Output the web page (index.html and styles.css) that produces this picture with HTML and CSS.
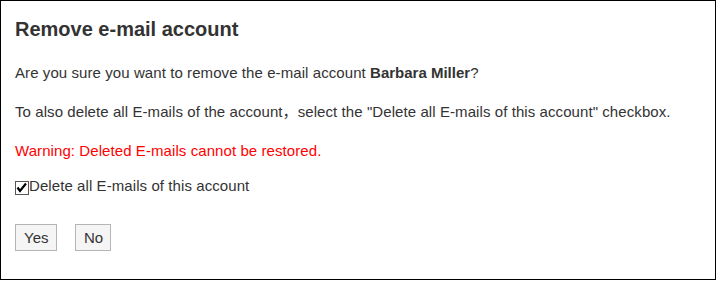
FILE: index.html
```html
<!DOCTYPE html>
<html>
<head>
<meta charset="utf-8">
<link rel="stylesheet" href="styles.css">
</head>
<body>
<div class="dialog">
  <h1 class="title">Remove e-mail account</h1>
  <p class="msg msg-first">Are you sure you want to remove the e-mail account <b>Barbara Miller</b>?</p>
  <p class="msg">To also delete all E-mails of the account，select the "Delete all E-mails of this account" checkbox.</p>
  <p class="msg warn">Warning: Deleted E-mails cannot be restored.</p>
  <label class="check"><span class="box"><svg width="13" height="13" viewBox="0 0 13 13"><path d="M2.5 6.5 L5 10 L11 2.5" fill="none" stroke="#000" stroke-width="2.2"/></svg></span>Delete all E-mails of this account</label>
  <div class="buttons">
    <button class="btn btn-yes">Yes</button>
    <button class="btn btn-no">No</button>
  </div>
</div>
</body>
</html>
```
FILE: styles.css
```css
html, body {
  margin: 0;
  padding: 0;
  background: #fff;
}
body {
  font-family: "Liberation Sans", "Noto Sans CJK JP", Arial, sans-serif;
  color: #333;
}
.dialog {
  box-sizing: border-box;
  width: 716px;
  height: 280px;
  border: 1px solid #000;
  padding: 16px 14px 0 14px;
}
.title {
  margin: 0;
  font-size: 20px;
  line-height: 24px;
  font-weight: bold;
  color: #333;
}
.msg {
  margin: 19px 0 0 0;
  font-size: 15px;
  line-height: 20px;
  letter-spacing: 0.08px;
}
.msg-first {
  margin-top: 22px;
}
.msg b {
  color: #333;
  letter-spacing: 0;
}
.warn {
  color: #ff0000;
}
.check {
  display: flex;
  align-items: center;
  margin-top: 15px;
  font-size: 15px;
  line-height: 20px;
  letter-spacing: 0.08px;
}
.box {
  display: inline-block;
  width: 12px;
  height: 12px;
  border: 1px solid #555;
  position: relative;
  margin-top: 3px;
}
.box svg {
  position: absolute;
  left: -1px;
  top: -1px;
}
.buttons {
  display: flex;
  gap: 18px;
  margin-top: 28px;
}
.btn {
  box-sizing: border-box;
  height: 27px;
  padding: 0 8px;
  border: 1px solid #b5b5b5;
  background: #f5f5f5;
  font-family: "Liberation Sans", Arial, sans-serif;
  font-size: 15px;
  color: #333;
  border-radius: 0;
}
.btn-yes {
  width: 42px;
}
.btn-no {
  width: 36px;
}
```
